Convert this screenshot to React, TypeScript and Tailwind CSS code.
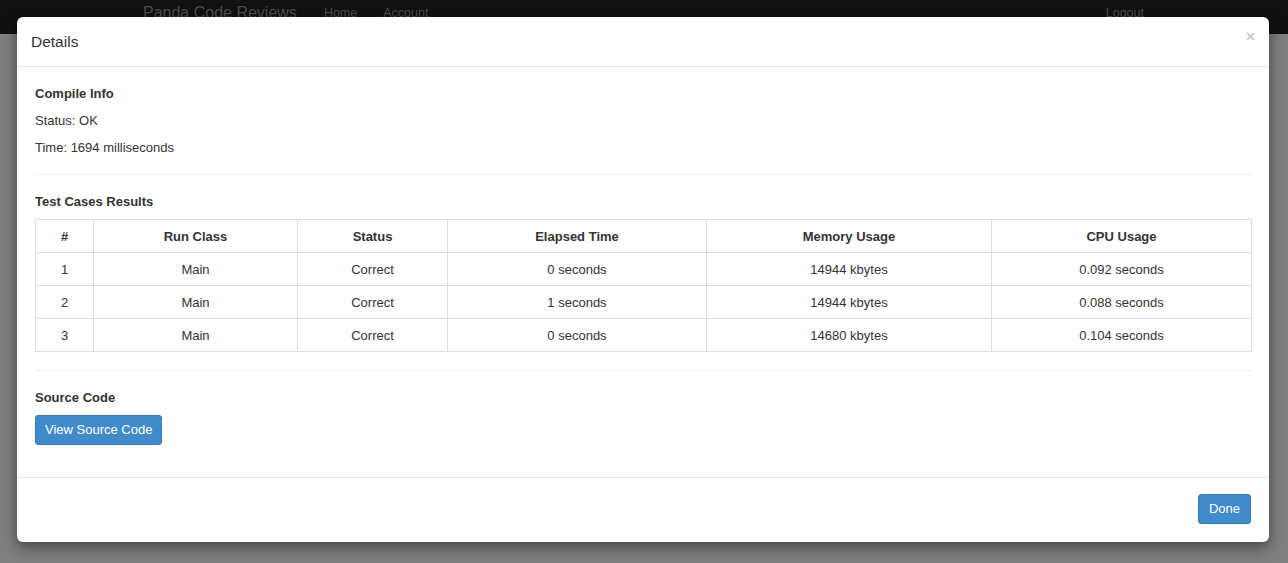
import React from "react";

const rows = [
  { id: 1, runClass: "Main", status: "Correct", elapsed: "0 seconds", memory: "14944 kbytes", cpu: "0.092 seconds" },
  { id: 2, runClass: "Main", status: "Correct", elapsed: "1 seconds", memory: "14944 kbytes", cpu: "0.088 seconds" },
  { id: 3, runClass: "Main", status: "Correct", elapsed: "0 seconds", memory: "14680 kbytes", cpu: "0.104 seconds" },
];

const headers = ["#", "Run Class", "Status", "Elapsed Time", "Memory Usage", "CPU Usage"];

const App = () => {
  return (
    <main className="relative h-[563px] w-full overflow-hidden bg-[#808080] font-['Liberation_Sans',Arial,sans-serif] text-[13px] text-[#333]">
      {/* Navbar behind the backdrop */}
      <header className="flex h-[34px] items-start bg-[#111] pl-[143px] text-[#4e4e4e]">
        <span className="text-[16px] leading-[25px]">Panda Code Reviews</span>
        <nav className="ml-[27px] flex gap-[26px] text-[12.5px] leading-[26px]">
          <a href="#">Home</a>
          <a href="#">Account</a>
        </nav>
        <a href="#" className="ml-auto mr-[144px] text-[12.5px] leading-[26px]">
          Logout
        </a>
      </header>

      {/* Modal */}
      <div className="absolute left-[17px] top-[17px] w-[1252px] rounded-[6px] bg-white shadow-[0_5px_15px_rgba(0,0,0,0.5)]">
        {/* Header */}
        <div className="flex h-[50px] items-center justify-between border-b border-[#e5e5e5] pl-[14px] pr-[14px]">
          <h4 className="text-[15.5px] text-[#333]">Details</h4>
          <button className="-mt-[10px] text-[16px] font-bold leading-none text-[#c8c8c8]">×</button>
        </div>

        {/* Body */}
        <div className="px-[18px] pt-[18px] pb-[32px]">
          <h5 className="font-bold leading-[18px]">Compile Info</h5>
          <p className="mt-[9px] leading-[18px]">Status: OK</p>
          <p className="mt-[9px] leading-[18px]">Time: 1694 milliseconds</p>

          <hr className="mt-[17px] border-t border-[#eee]" />

          <h5 className="mt-[18px] font-bold leading-[18px]">Test Cases Results</h5>
          <table className="mt-[8px] w-full table-fixed border-collapse border border-[#ddd] text-center">
            <colgroup>
              <col className="w-[58px]" />
              <col className="w-[204px]" />
              <col className="w-[150px]" />
              <col className="w-[259px]" />
              <col className="w-[285px]" />
              <col className="w-[260px]" />
            </colgroup>
            <thead>
              <tr>
                {headers.map((h) => (
                  <th key={h} className="h-[33px] border border-[#ddd] p-0 pt-[1px] font-bold">
                    {h}
                  </th>
                ))}
              </tr>
            </thead>
            <tbody>
              {rows.map((r) => (
                <tr key={r.id}>
                  <td className="h-[33px] border border-[#ddd] p-0 pt-[1px]">{r.id}</td>
                  <td className="border border-[#ddd] p-0 pt-[1px]">{r.runClass}</td>
                  <td className="border border-[#ddd] p-0 pt-[1px]">{r.status}</td>
                  <td className="border border-[#ddd] p-0 pt-[1px]">{r.elapsed}</td>
                  <td className="border border-[#ddd] p-0 pt-[1px]">{r.memory}</td>
                  <td className="border border-[#ddd] p-0 pt-[1px]">{r.cpu}</td>
                </tr>
              ))}
            </tbody>
          </table>

          <hr className="mt-[18px] border-t border-[#eee]" />

          <h5 className="mt-[18px] font-bold leading-[18px]">Source Code</h5>
          <button className="mt-[8px] h-[30px] rounded-[3px] border border-[#357ebd] bg-[#428bca] px-[9px] text-white">
            View Source Code
          </button>
        </div>

        {/* Footer */}
        <div className="flex justify-end border-t border-[#e5e5e5] px-[18px] pt-[16px] pb-[18px]">
          <button className="h-[30px] rounded-[3px] border border-[#357ebd] bg-[#428bca] px-[10px] text-white">
            Done
          </button>
        </div>
      </div>
    </main>
  );
};

export default App;
